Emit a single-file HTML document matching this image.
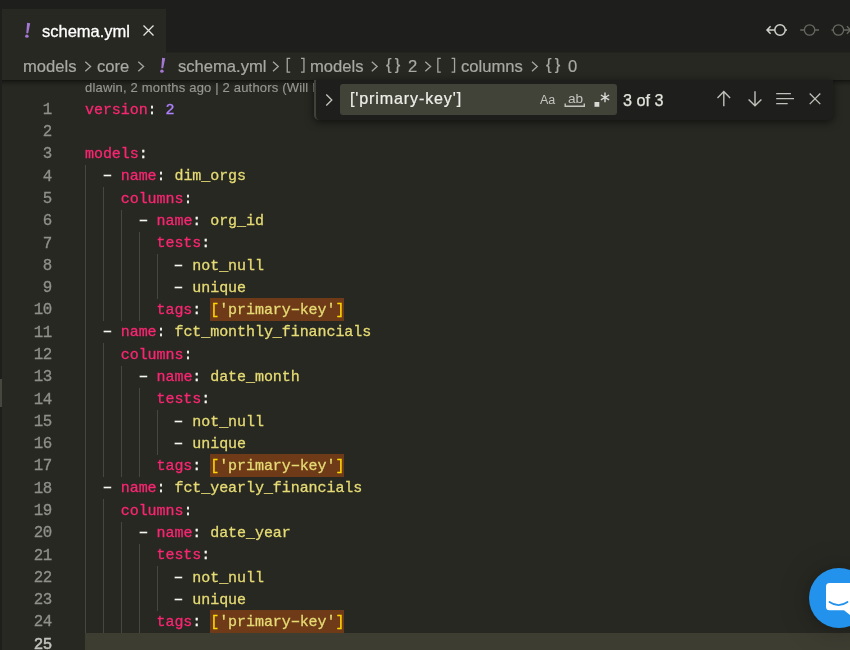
<!DOCTYPE html>
<html><head><meta charset="utf-8"><title>schema.yml</title>
<style>
*{box-sizing:border-box;margin:0;padding:0}
html,body{width:850px;height:650px;overflow:hidden;background:#272822}
body{position:relative;font-family:"Liberation Sans",sans-serif;color:#f8f8f2}
.abs{position:absolute}
#tabbar{position:absolute;left:0;top:0;width:850px;height:52px;background:#1e1f1c;box-shadow:0 1px 0 #22231e}
#tab{position:absolute;left:2px;top:9px;width:164px;height:44px;background:#272822}
#strip{position:absolute;left:0;top:0;width:2px;height:650px;background:#1e1f1c}
#stripthumb{position:absolute;left:0;top:379px;width:2px;height:28px;background:#46473f}
#crumbs{position:absolute;left:2px;top:53px;width:848px;height:27px;background:#272822}
#shadow{position:absolute;left:2px;top:79.5px;width:848px;height:7px;background:linear-gradient(rgba(0,0,0,.5),rgba(0,0,0,.28) 30%,rgba(0,0,0,.08) 70%,rgba(0,0,0,0))}
.t{position:absolute;white-space:pre;line-height:1}
.cr{color:#a9a9a4;font-size:16.6px;top:58px}
/* editor */
#editor{position:absolute;left:2px;top:80px;width:848px;height:570px;background:#272822;overflow:hidden}
.ln,.cl{position:absolute;font-family:"Liberation Mono",monospace;font-size:15px;line-height:22.286px;height:22.286px;white-space:pre;letter-spacing:-.06px;-webkit-text-stroke:.3px currentColor}
.ln{left:0;width:52.5px;text-align:right;color:#90908a;font-size:15.8px;letter-spacing:-.54px;padding-right:.8px;-webkit-text-stroke:.3px currentColor}
.ln.act{color:#c2c2bf;-webkit-text-stroke:.5px #c2c2bf}
.cl{left:85px}
.k{color:#f92672}.w{color:#f8f8f2}.s{color:#e6db74}.n{color:#ae81ff}.b{color:#ffd700}
.h{position:relative}
.h::before{content:"";position:absolute;left:0;right:0;top:-3.94px;height:22.7px;background:#6e3a17;z-index:-1}
.d{font-weight:normal;display:inline-block;transform:scaleX(1.04);position:relative;top:-1.4px;-webkit-text-stroke:.7px currentColor}
.g{position:absolute;width:1px;background:#464741}
#curline{position:absolute;left:85px;top:633.06px;width:765px;height:22.3px;background:#3e3d32}
#lens{position:absolute;left:85px;top:79.5px;font-size:13px;letter-spacing:.18px;color:#969791;-webkit-text-stroke:.15px #969791;white-space:pre;line-height:15px}
/* find widget */
#find{position:absolute;left:314px;top:80px;width:519px;height:40px;background:#1e1f1c;border-left:2px solid #40413b;border-radius:0 0 5px 5px;box-shadow:0 2px 8px rgba(0,0,0,.6)}
#finput{position:absolute;left:340px;top:83.6px;width:277px;height:31.2px;background:#414339;border-radius:3px}
#chat{position:absolute;left:809px;top:568px;width:60px;height:60px;border-radius:50%;background:#2392ec;box-shadow:0 1px 6px rgba(0,0,0,.1),0 2px 32px rgba(0,0,0,.22)}

.tt,.ln,.cl,#lens{will-change:transform}
.tt{position:absolute;white-space:pre;line-height:20px;height:20px}
#tabtitle{left:42px;top:21.4px;font-size:16.5px;color:#fff;-webkit-text-stroke:.3px #fff}
.bang{font-style:italic;color:#a074c4;font-weight:bold}
#tabbang{left:24px;top:20px;font-size:18px}
.c{color:#a9a9a4;font-size:16.6px;top:57px;-webkit-text-stroke:.2px #a9a9a4}
.br{letter-spacing:3.2px;top:54.6px}
.icon{position:absolute;overflow:visible}
#ftext{left:349.6px;top:88.4px;font-size:16.1px;letter-spacing:.86px;color:#f0f0ea;-webkit-text-stroke:.2px #f0f0ea}
#fcount{left:623px;top:90px;font-size:16.2px;color:#e4e4de;-webkit-text-stroke:.25px #e4e4de}
#faa{left:540px;top:90px;font-size:12.5px;color:#c5c5c0}
#fab{left:567.5px;top:88.6px;font-size:13.6px;color:#c5c5c0}
</style></head>
<body>
<div id="tabbar"></div>
<div id="tab"></div>
<svg class="icon" style="left:23.5px;top:22px" width="8" height="17" viewBox="0 0 8 17"><path d="M3.1 0.8 L6.2 1.2 L4.2 11.2 L2.3 11.2 Z" fill="#a577d4"/><ellipse cx="2.9" cy="14.2" rx="1.75" ry="1.6" fill="#a577d4"/></svg>
<div class="tt" id="tabtitle">schema.yml</div>
<svg class="icon" style="left:143px;top:25px" width="11" height="11" viewBox="0 0 11 11"><path d="M0.5 0.5 L10.5 10.5 M10.5 0.5 L0.5 10.5" stroke="#e4e4e0" stroke-width="1.3" fill="none"/></svg>
<!-- top right icons -->
<svg class="icon" style="left:764px;top:20px" width="86" height="20" viewBox="0 0 86 20">
 <g fill="none" stroke="#d0d0cc" stroke-width="1.5">
  <circle cx="16" cy="10" r="5.2"/><path d="M3.2 10 H10.8 M6.6 6.2 L3 10 L6.6 13.8 M21.2 10 H23"/>
 </g>
 <g fill="none" stroke="#66675f" stroke-width="1.3">
  <circle cx="45.6" cy="10" r="5.2"/><path d="M36.2 10 H40.4 M50.8 10 H55"/>
  <circle cx="74.4" cy="10" r="5.2"/><path d="M67.5 10 H69.2 M79.6 10 H87 M82.9 6.2 L86.5 10 L82.9 13.8"/>
 </g>
</svg>

<div id="editor"></div>
<div id="shadow"></div>
<div id="curline"></div>
<div id="lens">dlawin, 2 months ago | 2 authors (Will L</div>
<i class="g" style="left:85.0px;top:165.06px;height:468.01px"></i>
<i class="g" style="left:102.9px;top:187.34px;height:133.72px"></i>
<i class="g" style="left:102.9px;top:343.35px;height:133.72px"></i>
<i class="g" style="left:102.9px;top:499.35px;height:133.72px"></i>
<i class="g" style="left:120.8px;top:209.63px;height:111.43px"></i>
<i class="g" style="left:120.8px;top:365.63px;height:111.43px"></i>
<i class="g" style="left:120.8px;top:521.63px;height:111.43px"></i>
<i class="g" style="left:138.6px;top:231.92px;height:89.14px"></i>
<i class="g" style="left:138.6px;top:387.92px;height:89.14px"></i>
<i class="g" style="left:138.6px;top:543.92px;height:89.14px"></i>
<i class="g" style="left:156.5px;top:254.20px;height:44.57px"></i>
<i class="g" style="left:156.5px;top:410.20px;height:44.57px"></i>
<i class="g" style="left:156.5px;top:566.21px;height:44.57px"></i>
<div class="ln" style="top:98.80px">1</div>
<div class="cl" style="top:99.50px"><span class="k">version</span><span class="w">: </span><span class="n">2</span></div>
<div class="ln" style="top:121.09px">2</div>
<div class="ln" style="top:143.37px">3</div>
<div class="cl" style="top:144.07px"><span class="k">models</span><span class="w">:</span></div>
<div class="ln" style="top:165.66px">4</div>
<div class="cl" style="top:166.36px"><span class="w">  <b class="d">–</b> </span><span class="k">name</span><span class="w">: </span><span class="s">dim_orgs</span></div>
<div class="ln" style="top:187.94px">5</div>
<div class="cl" style="top:188.64px"><span class="w">    </span><span class="k">columns</span><span class="w">:</span></div>
<div class="ln" style="top:210.23px">6</div>
<div class="cl" style="top:210.93px"><span class="w">      <b class="d">–</b> </span><span class="k">name</span><span class="w">: </span><span class="s">org_id</span></div>
<div class="ln" style="top:232.52px">7</div>
<div class="cl" style="top:233.22px"><span class="w">        </span><span class="k">tests</span><span class="w">:</span></div>
<div class="ln" style="top:254.80px">8</div>
<div class="cl" style="top:255.50px"><span class="w">          <b class="d">–</b> </span><span class="s">not_null</span></div>
<div class="ln" style="top:277.09px">9</div>
<div class="cl" style="top:277.79px"><span class="w">          <b class="d">–</b> </span><span class="s">unique</span></div>
<div class="ln" style="top:299.37px">10</div>
<div class="cl" style="top:300.07px"><span class="w">        </span><span class="k">tags</span><span class="w">: </span><span class="h"><span class="b">[</span><span class="s">'primary<b class="d">–</b>key'</span><span class="b">]</span></span></div>
<div class="ln" style="top:321.66px">11</div>
<div class="cl" style="top:322.36px"><span class="w">  <b class="d">–</b> </span><span class="k">name</span><span class="w">: </span><span class="s">fct_monthly_financials</span></div>
<div class="ln" style="top:343.95px">12</div>
<div class="cl" style="top:344.65px"><span class="w">    </span><span class="k">columns</span><span class="w">:</span></div>
<div class="ln" style="top:366.23px">13</div>
<div class="cl" style="top:366.93px"><span class="w">      <b class="d">–</b> </span><span class="k">name</span><span class="w">: </span><span class="s">date_month</span></div>
<div class="ln" style="top:388.52px">14</div>
<div class="cl" style="top:389.22px"><span class="w">        </span><span class="k">tests</span><span class="w">:</span></div>
<div class="ln" style="top:410.80px">15</div>
<div class="cl" style="top:411.50px"><span class="w">          <b class="d">–</b> </span><span class="s">not_null</span></div>
<div class="ln" style="top:433.09px">16</div>
<div class="cl" style="top:433.79px"><span class="w">          <b class="d">–</b> </span><span class="s">unique</span></div>
<div class="ln" style="top:455.38px">17</div>
<div class="cl" style="top:456.08px"><span class="w">        </span><span class="k">tags</span><span class="w">: </span><span class="h"><span class="b">[</span><span class="s">'primary<b class="d">–</b>key'</span><span class="b">]</span></span></div>
<div class="ln" style="top:477.66px">18</div>
<div class="cl" style="top:478.36px"><span class="w">  <b class="d">–</b> </span><span class="k">name</span><span class="w">: </span><span class="s">fct_yearly_financials</span></div>
<div class="ln" style="top:499.95px">19</div>
<div class="cl" style="top:500.65px"><span class="w">    </span><span class="k">columns</span><span class="w">:</span></div>
<div class="ln" style="top:522.23px">20</div>
<div class="cl" style="top:522.93px"><span class="w">      <b class="d">–</b> </span><span class="k">name</span><span class="w">: </span><span class="s">date_year</span></div>
<div class="ln" style="top:544.52px">21</div>
<div class="cl" style="top:545.22px"><span class="w">        </span><span class="k">tests</span><span class="w">:</span></div>
<div class="ln" style="top:566.81px">22</div>
<div class="cl" style="top:567.51px"><span class="w">          <b class="d">–</b> </span><span class="s">not_null</span></div>
<div class="ln" style="top:589.09px">23</div>
<div class="cl" style="top:589.79px"><span class="w">          <b class="d">–</b> </span><span class="s">unique</span></div>
<div class="ln" style="top:611.38px">24</div>
<div class="cl" style="top:612.08px"><span class="w">        </span><span class="k">tags</span><span class="w">: </span><span class="h"><span class="b">[</span><span class="s">'primary<b class="d">–</b>key'</span><span class="b">]</span></span></div>
<div class="ln act" style="top:633.66px">25</div>
<div id="crumbs"></div>
<div class="tt c" style="left:23px">models</div>
<div class="tt c" style="left:97px">core</div>
<svg class="icon" style="left:158.5px;top:57.3px" width="8" height="17" viewBox="0 0 8 17"><path d="M3.1 0.8 L6.2 1.2 L4.2 11.2 L2.3 11.2 Z" fill="#a577d4"/><ellipse cx="2.9" cy="14.2" rx="1.75" ry="1.6" fill="#a577d4"/></svg>
<div class="tt c" style="left:177.5px">schema.yml</div>
<div class="tt c" style="left:310px">models</div>
<div class="tt c br" style="left:386px">{}</div>
<div class="tt c" style="left:407.5px">2</div>
<div class="tt c" style="left:460.7px">columns</div>
<div class="tt c br" style="left:546.3px">{}</div>
<div class="tt c" style="left:568px">0</div>
<svg class="icon" style="left:0;top:52px" width="600" height="28" viewBox="0 0 600 28"><g fill="none" stroke="#a6a6a1" stroke-width="1.3">
<path d="M85.3 9.7 L90.6 14.5 L85.3 19.3"/><path d="M138.3 9.7 L143.60000000000002 14.5 L138.3 19.3"/><path d="M273 9.7 L278.3 14.5 L273 19.3"/><path d="M371.8 9.7 L377.1 14.5 L371.8 19.3"/><path d="M425.3 9.7 L430.6 14.5 L425.3 19.3"/><path d="M532 9.7 L537.3 14.5 L532 19.3"/><path d="M290.20000000000005 6.3 H287.25 V20.2 H290.20000000000005 M301.0 6.3 H303.95000000000005 V20.2 H301.0"/><path d="M440.8 6.3 H437.84999999999997 V20.2 H440.8 M451.59999999999997 6.3 H454.55 V20.2 H451.59999999999997"/>
</g></svg>

<div id="find"></div>
<div id="finput"></div>
<svg class="icon" style="left:324px;top:92px" width="12" height="16" viewBox="0 0 12 16"><path d="M2.3 2.5 L7.8 8 L2.3 13.5" fill="none" stroke="#c5c5c0" stroke-width="1.3"/></svg>
<div class="tt" id="ftext">['primary-key']</div>
<div class="tt" id="faa">Aa</div>
<div class="tt" id="fab">ab</div>
<svg class="icon" style="left:564px;top:88px" width="50" height="24" viewBox="0 0 50 24"><g fill="none" stroke="#c5c5c0" stroke-width="1.1">
<path d="M1.2 15.6 V18.2 H20.3 V15.6" stroke-width="1.4"/>
</g>
<rect x="30.5" y="14" width="4.8" height="4.8" fill="#d8d8d4"/>
<g stroke="#d8d8d4" stroke-width="1.4" fill="none"><path d="M41 4.6 V14.2 M36.9 7 L45.1 11.8 M45.1 7 L36.9 11.8"/></g>
</svg>
<div class="tt" id="fcount">3 of 3</div>
<svg class="icon" style="left:710px;top:88px" width="120" height="24" viewBox="0 0 120 24"><g fill="none" stroke="#c0c0bb" stroke-width="1.4">
<path d="M13.8 18.2 V3.6 M7.5 9.9 L13.8 3.6 L20.1 9.9"/>
<path d="M45 3.2 V17.8 M38.6 11.4 L45 17.8 L51.4 11.4"/>
<path d="M66.2 5.6 H80.9 M66.2 10.6 H84 M66.2 15.7 H77.7" stroke-width="1.3"/>
<path d="M99.7 5.5 L110.3 16.1 M110.3 5.5 L99.7 16.1" stroke-width="1.3"/>
</g></svg>

<div id="chat"></div>
<svg class="icon" style="left:809px;top:568px" width="60" height="60" viewBox="0 0 60 60">
<path d="M20.5 15 H41 V47 L35 42.2 H20.5 Q17 42.2 17 38.7 V18.5 Q17 15 20.5 15 Z" fill="#fff"/>
<path d="M20.5 34 Q29.5 40.2 38.5 34" fill="none" stroke="#2392ec" stroke-width="1.8" stroke-linecap="round"/>
</svg>

<div id="strip"></div><div id="stripthumb"></div>
</body></html>
